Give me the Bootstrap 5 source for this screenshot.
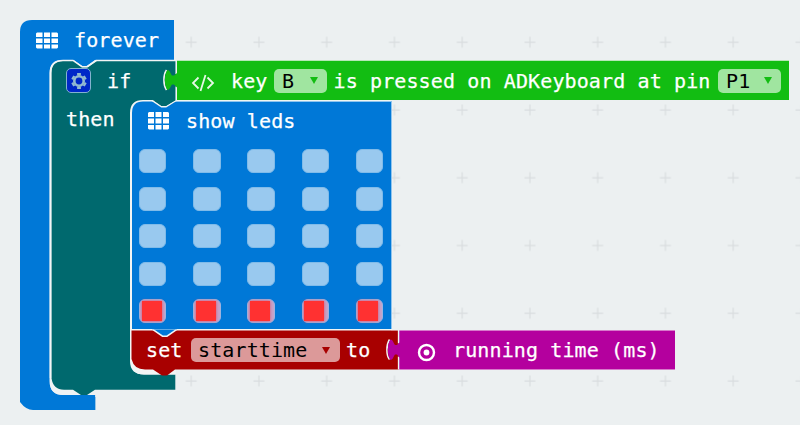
<!DOCTYPE html>
<html lang="en">
<head>
<meta charset="utf-8">
<title>Block editor</title>
<link href="https://cdn.jsdelivr.net/npm/bootstrap@5.3.0/dist/css/bootstrap.min.css" rel="stylesheet">
<style>
  body { background: #ecf0f1; }
  .workspace { width: 800px; height: 425px; font: 20px/24px "DejaVu Sans Mono", monospace; letter-spacing: .12px; color: #fff; -webkit-text-stroke: .25px currentColor; }
  .shapes { left: 0; top: 0; }
  /* contents of the blocks, placed on the free canvas */
  .blk { position: absolute; white-space: nowrap; }
  .blk-forever { left: 36px; top: 28px; height: 24px; gap: 16px; }
  .blk-if { left: 66px; top: 68px; height: 25px; gap: 16px; }
  .blk-then { left: 66px; top: 107px; }
  .blk-key { left: 176px; top: 61px; width: 613px; height: 39px; padding-left: 15px; }
  .blk-leds { left: 132px; top: 101px; width: 259px; height: 229px; padding: 8px 7px 0; }
  .leds-head { height: 24px; gap: 17px; padding-left: 9px; }
  .blk-set { left: 132px; top: 331px; height: 38px; padding-left: 14px; }
  .blk-time { left: 399px; top: 331px; width: 276px; height: 38px; padding-left: 18px; gap: 17px; }
  .gear { width: 25px; height: 25px; background: #0028c8; border: 1.4px solid #83b2cf; border-radius: 5px; }
  .drop { height: 24px; border-radius: 5px; color: #000; -webkit-text-stroke: 0; }
  .drop-green { background: #a0e5a0; padding: 0 9px 0 8px; }
  .drop-red { background: #dc9999; padding: 0 10px 0 7px; }
  .drop-key { width: 53px; margin: 0 6.5px 0 6.5px; }
  .drop-pin { width: 63.5px; margin-left: 7.5px; }
  .drop-var { width: 149px; margin: 0 6px 0 8.5px; }
  .led-grid { display: grid; grid-template-columns: repeat(5, 27.4px); column-gap: 26.8px; row-gap: 13.6px; margin-top: 16px; }
  .led { height: 24px; border-radius: 6px; background: #99c9ef; border: 1px solid #80bbe9; }
  .led-on { background: #c3a5cc; border-color: #9fb3de; padding: 1px 0 0 1.5px; }
  .led-on::before { content: ""; display: block; width: 20px; height: 20px; background: #ff3131; box-shadow: 0 0 3px #d8506c; }
</style>
<script src="https://cdn.jsdelivr.net/npm/bootstrap@5.3.0/dist/js/bootstrap.bundle.min.js"></script>
</head>
<body class="overflow-hidden">
<main class="workspace position-relative overflow-hidden">
  <svg class="shapes position-absolute" width="800" height="425" viewBox="0 0 800 425">
    <defs>
      <pattern id="crosses" x="157.3" y="8.3" width="67.75" height="67.75" patternUnits="userSpaceOnUse">
        <path d="M28.4 33.9h11M33.9 28.4v11" stroke="#d9dddf" stroke-width="1.2"/>
      </pattern>
    </defs>
    <rect width="800" height="425" fill="url(#crosses)"/>
    <!-- forever -->
    <path fill="#0078d7" d="M20 32Q20 20 32 20H174V61H63Q50 61 50 73V382Q50 395 63 395H95.200V410H33Q26 410 20 402Z"/>
    <path fill="#f0f3f4" d="M49.500 73Q49.500 60 63 60H176V376H140V391H95L86 395H64Q49.500 395 49.500 381Z"/>
    <path fill="#0078d7" d="M60 395H95.200V410H60ZM73 59.500L82 66H87L95 60V58H73Z"/>
    <path fill="#ecf0f1" d="M95.300 390H177V397H95.300ZM175.300 375H178V391H175.300Z"/>
    <!-- if / then -->
    <path fill="#00696e" d="M51.500 73Q51.500 61 63 61H74L82 67.300H88L97 61H176V101H175L165 108H160L153 101H142Q131 101 131 113V361Q131 374.500 144 374.500H175.300V389.700H95L87 395H81L73 389.700H64Q53 389.700 51.500 378Z"/>
    <path fill="none" stroke="#f2f5f5" stroke-width="1.5" d="M50.500 378V73Q50.500 60.500 63 60.500H73L82 66.700H87L96 60.500H176"/>
    <!-- statement slot -->
    <path fill="#f2f5f5" d="M130 113Q130 100 143 100H176V370H175.500V374.500H144Q130 374.500 130 361Z"/>
    <path fill="#0078d7" d="M132 113Q132 101.500 143 101.500H391.500V329H132Z"/>
    <path fill="#8fc4ee" d="M176 101H391.500V102H176ZM391 101H392V329H391Z"/>
    <path fill="#00696e" stroke="#f2f5f5" stroke-width="1.500" d="M152 100.300L161.500 106.800H166L176.200 100.300"/>
    <path fill="#00696e" d="M150 98H176V100L165.500 106H162L153 99.700H150Z"/>
    <!-- set -->
    <path fill="#f2f5f5" d="M132 329H392V331H132Z"/>
    <path fill="#a80000" d="M131.500 330.500H399V369.500H175L167 375.500H162L153 369.500H145Q134 369.500 131.500 359Z"/>
    <path fill="#0078d7" stroke="#f2f5f5" stroke-width="1.500" d="M153 329.600L162.500 336.200H167L176.500 329.600"/>
    <path fill="#0078d7" d="M152 327H177V329.200H152Z"/>
    <path fill="#d58a8a" d="M391 330H398V331H391Z"/>
    <!-- key is pressed -->
    <path fill="none" stroke="#f2f5f5" stroke-width="1.500" d="M176.200 60.500V74M166.500 70C163 75 163 85 166.500 90M176.200 86.500V100.500"/>
    <path fill="#12bd12" d="M177 61H789V100H177V87.500L174 84.500H172C170.500 86 170 90 167.500 90C164 86 164 74 167.500 70C170 70 170.500 74 172 75.500H174L177 73Z"/>
    <path fill="#b5e7b6" d="M177 60H789V61H177Z"/>
    <path fill="#f0f6f1" d="M177 100H391V101H177Z"/>
    <!-- running time -->
    <path fill="none" stroke="#f2f5f5" stroke-width="1.500" d="M398.600 330V343.500M389.500 339.500C386 345 386 355 389.500 359.500M398.600 356.500V369.500"/>
    <path fill="#b4009e" d="M399.300 330.500H675V369.500H399.300V357.500L397 354.500H395C393.500 356 393 360 390.500 360C387 356 387 343.500 390.500 339.500C393 339.500 393.500 343.500 395 345H397L399.300 342.500Z"/>
    <path fill="#d77acb" d="M400 330H675V331H400ZM400 369H675V370H400Z"/>
  </svg>

  <div class="blk blk-forever d-flex align-items-center">
    <svg width="22" height="17" viewBox="0 0 22 17" fill="#fff"><path d="M1 .5h5.500V5H0V1.500zM8 .5h6V5H8zM15.500 .5H21l1 1V5h-6.500zM0 6.500h6.500V11H0zM8 6.500h6V11H8zM15.500 6.500H22V11h-6.500zM0 12.500h6.500v4H1l-1-1zM8 12.500h6v4H8zM15.500 12.500H22v3l-1 1h-5.500z"/></svg>
    <span>forever</span>
  </div>

  <div class="blk blk-if d-flex align-items-center">
    <span class="gear d-flex align-items-center justify-content-center">
      <svg width="18" height="18" viewBox="-9 -9 18 18" fill="none" stroke="#93bbd0"><circle r="4.700" stroke-width="2.600"/><g stroke-width="3.800"><path d="M0-5.500V-7.900M0 5.500V7.900M4.800-2.750L6.700-3.900M-4.800-2.750L-6.700-3.900M4.800 2.750L6.700 3.900M-4.800 2.750L-6.700 3.900"/></g></svg>
    </span>
    <span>if</span>
  </div>
  <div class="blk blk-then">then</div>

  <div class="blk blk-key d-flex align-items-center">
    <svg class="mt-1" width="24" height="20" viewBox="0 0 24 20" fill="none" stroke="#e6f8e6" stroke-width="1.800"><path d="M7.500 4.500L2 10L7.500 15.500M16.500 4.500L22 10L16.500 15.500M14.500 2L9.500 18"/></svg>
    <span class="ms-3">key</span>
    <span class="drop drop-green drop-key d-flex align-items-center justify-content-between"><span>B</span><svg width="8" height="7"><path fill="#12bd12" d="M0 0H8L4 7Z"/></svg></span>
    <span>is pressed on ADKeyboard at pin</span>
    <span class="drop drop-green drop-pin d-flex align-items-center justify-content-between"><span>P1</span><svg width="8" height="7"><path fill="#12bd12" d="M0 0H8L4 7Z"/></svg></span>
  </div>

  <div class="blk blk-leds">
    <div class="leds-head d-flex align-items-center">
      <svg width="21" height="18" viewBox="0 0 21 18" fill="#fff"><path d="M1 0h5v5H0V1zM7.500 0h6v5h-6zM15 0h5l1 1v4h-6zM0 6.500h6v5H0zM7.500 6.500h6v5h-6zM15 6.500h6v5h-6zM0 13h6v4.500H1l-1-1zM7.500 13h6v4.500h-6zM15 13h6v3.500l-1 1h-5z"/></svg>
      <span>show leds</span>
    </div>
    <div class="led-grid">
      <i class="led"></i><i class="led"></i><i class="led"></i><i class="led"></i><i class="led"></i>
      <i class="led"></i><i class="led"></i><i class="led"></i><i class="led"></i><i class="led"></i>
      <i class="led"></i><i class="led"></i><i class="led"></i><i class="led"></i><i class="led"></i>
      <i class="led"></i><i class="led"></i><i class="led"></i><i class="led"></i><i class="led"></i>
      <i class="led led-on"></i><i class="led led-on"></i><i class="led led-on"></i><i class="led led-on"></i><i class="led led-on"></i>
    </div>
  </div>

  <div class="blk blk-set d-flex align-items-center">
    <span>set</span>
    <span class="drop drop-red drop-var d-flex align-items-center justify-content-between"><span>starttime</span><svg width="8" height="7"><path fill="#a80000" d="M0 0H8L4 7Z"/></svg></span>
    <span>to</span>
  </div>

  <div class="blk blk-time d-flex align-items-center">
    <svg class="mt-1" width="19" height="19" viewBox="-9.500 -9.500 19 19"><circle r="7.500" fill="none" stroke="#fff" stroke-width="2.400"/><circle r="2.900" fill="#fff"/></svg>
    <span>running time (ms)</span>
  </div>
</main>
</body>
</html>
